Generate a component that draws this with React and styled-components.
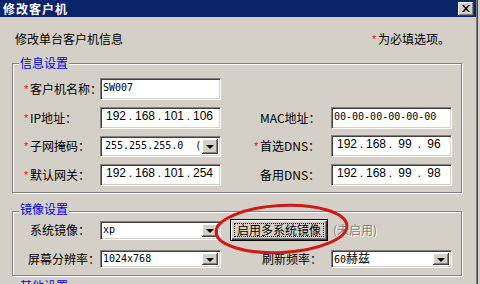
import React from 'react';
import styled, { createGlobalStyle } from 'styled-components';

const CJK = `"Noto Sans CJK SC", "Noto Sans", sans-serif`;
const MONO = `"DejaVu Sans Mono", "Noto Sans CJK SC", monospace`;
const FACE = '#d4d0c8';

const Global = createGlobalStyle`
  html, body { margin: 0; padding: 0; background: ${FACE}; }
  body { width: 480px; height: 284px; overflow: hidden; font-family: ${CJK}; font-size: 12px; color: #000; }
  * { box-sizing: border-box; }
`;

const Win = styled.div`
  position: relative;
  width: 477px;
  height: 284px;
  background: ${FACE};
  border-right: 1px solid #808080;
  box-shadow: 1px 0 0 #404040;
  overflow: hidden;
`;

const TitleBar = styled.div`
  height: 17px;
  background: #0a246a;
  display: flex;
  align-items: center;
  justify-content: space-between;
  padding: 0 2px 0 3px;
`;

const Title = styled.span`
  color: #fff;
  font-weight: bold;
  font-size: 12px;
  line-height: 14px;
  letter-spacing: 1px;
`;

const CloseBtn = styled.div`
  width: 16px;
  height: 14px;
  background: ${FACE};
  box-shadow: inset -1px -1px 0 #404040, inset 1px 1px 0 #fff, inset -2px -2px 0 #808080;
  display: flex;
  align-items: center;
  justify-content: center;
  padding-bottom: 1px;
`;

const HeaderRow = styled.div`
  display: flex;
  justify-content: space-between;
  margin-top: 15px;
  padding: 0 26px 0 15px;
  height: 14px;
  line-height: 14px;
`;

const Note = styled.span`
  display: flex;
  align-items: center;
`;

const Star = styled.span`
  display: inline-block;
  width: ${p => p.$w || 6}px;
  color: #e01010;
  font-family: "Liberation Sans", sans-serif;
  font-size: 11px;
  flex: none;
`;

const Group = styled.fieldset`
  margin: ${p => p.$mt}px 0 0 12px;
  width: 450px;
  padding: 0;
  border: 1px solid #808080;
  box-shadow: inset 1px 1px 0 #fff, 1px 1px 0 #fff;
  min-width: 0;
`;

const Legend = styled.legend`
  margin-left: 6px;
  padding: 0 1px ${p => p.$pb || 0}px;
  color: #0000e0;
  font-size: 12px;
  line-height: 14px;
  background: ${FACE};
`;

const Rows = styled.div`
  display: flex;
  flex-direction: column;
  gap: ${p => p.$gap}px;
  padding: ${p => p.$pad};
  margin-top: ${p => p.$mt || 0}px;
`;

const Row = styled.div`
  display: flex;
  align-items: center;
  height: ${p => p.$h || 22}px;
`;

const Label = styled.div`
  width: ${p => p.$w}px;
  margin-left: ${p => p.$ml || 0}px;
  padding-left: ${p => p.$indent || 0}px;
  display: flex;
  align-items: center;
  line-height: 14px;
  white-space: nowrap;
  flex: none;
`;

const sunken = `
  border: 1px solid;
  border-color: #808080 #fff #fff #808080;
  box-shadow: inset 1px 1px 0 #404040, inset -1px -1px 0 ${FACE};
  background: #fff;
`;

const Edit = styled.div`
  ${sunken}
  width: 121px;
  height: 22px;
  flex: none;
  padding: 2px 0 0 2px;
  font-family: ${MONO};
  font-size: 10px;
  line-height: 14px;
  white-space: pre;
`;

const IPBox = styled.div`
  ${sunken}
  width: 121px;
  height: 22px;
  flex: none;
  display: flex;
  padding: 2px 0 0 4px;
  font-family: "Liberation Sans", sans-serif;
  font-size: 12px;
  line-height: 12px;
`;

const Octet = styled.span`
  width: 22px;
  text-align: center;
`;

const Dot = styled.span`
  width: 7px;
  text-align: center;
`;

const Combo = styled.div`
  ${sunken}
  width: 121px;
  height: ${p => p.$h}px;
  flex: none;
  display: flex;
  align-items: center;
  padding: 2px;
`;

const ComboText = styled.div`
  flex: 1;
  overflow: hidden;
  white-space: pre;
  padding-left: ${p => p.$pl || 0}px;
  font-family: ${MONO};
  font-size: 10px;
  line-height: 14px;
`;

const CjkPart = styled.span`
  font-family: ${CJK};
  font-size: 12px;
`;

const DropBtn = styled.div`
  width: 16px;
  align-self: stretch;
  flex: none;
  background: ${FACE};
  box-shadow: inset -1px -1px 0 #404040, inset 1px 1px 0 #fff, inset -2px -2px 0 #808080;
  display: flex;
  align-items: center;
  justify-content: center;
`;

const Arrow = styled.span`
  width: 0;
  height: 0;
  border-left: 4px solid transparent;
  border-right: 4px solid transparent;
  border-top: 4px solid #000;
  margin-top: 1px;
`;

const PushBtn = styled.div`
  margin-left: 9px;
  width: 98px;
  height: 22px;
  flex: none;
  border: 1px solid #000;
  background: ${FACE};
  box-shadow: inset 1px 1px 0 #fff, inset -1px -1px 0 #404040, inset -2px -2px 0 #808080;
  padding: 3px;
  display: flex;
`;

const Focus = styled.div`
  flex: 1;
  border: 1px dotted #000;
  display: flex;
  align-items: center;
  justify-content: center;
  line-height: 14px;
  white-space: nowrap;
`;

const Disabled = styled.span`
  margin-left: 5px;
  color: #808080;
  text-shadow: 1px 1px 0 #fff;
  line-height: 14px;
`;

const Mark = styled.svg`
  position: absolute;
  left: 0;
  top: 0;
  pointer-events: none;
`;

function Ip({ parts }) {
  return (
    <IPBox>
      {parts.map((p, i) => (
        <React.Fragment key={i}>
          {i > 0 && <Dot>.</Dot>}
          <Octet>{p}</Octet>
        </React.Fragment>
      ))}
    </IPBox>
  );
}

function Drop({ children, h = 21, pl }) {
  return (
    <Combo $h={h}>
      <ComboText $pl={pl}>{children}</ComboText>
      <DropBtn><Arrow /></DropBtn>
    </Combo>
  );
}

function L({ req, w = 76, ml, indent, children }) {
  return (
    <Label $w={w} $ml={ml} $indent={indent}>
      {!indent && <Star>{req ? '*' : ''}</Star>}
      {children}
    </Label>
  );
}

export default function App() {
  return (
    <>
      <Global />
      <Win>
        <TitleBar>
          <Title>修改客户机</Title>
          <CloseBtn>
            <svg width="8" height="7" viewBox="0 0 8 7">
              <path d="M0 0h2l2 2.4L6 0h2L5 3.5 8 7H6L4 4.6 2 7H0l3-3.5z" fill="#000" />
            </svg>
          </CloseBtn>
        </TitleBar>

        <HeaderRow>
          <span>修改单台客户机信息</span>
          <Note><Star>*</Star>为必填选项。</Note>
        </HeaderRow>

        <Group $mt={10}>
          <Legend>信息设置</Legend>
          <Rows $gap={6.5} $pad="8px 0 6px 11px">
            <Row>
              <L req>客户机名称：</L>
              <Edit>SW007</Edit>
            </Row>
            <Row>
              <L req>IP地址：</L>
              <Ip parts={['192', '168', '101', '106']} />
              <L w={77} ml={33}>MAC地址：</L>
              <Edit>00-00-00-00-00-00</Edit>
            </Row>
            <Row>
              <L req>子网掩码：</L>
              <Drop pl={2}>255.255.255.0  (Private)</Drop>
              <L req w={77} ml={33}>首选DNS：</L>
              <Ip parts={['192', '168', '99', '96']} />
            </Row>
            <Row>
              <L req>默认网关：</L>
              <Ip parts={['192', '168', '101', '254']} />
              <L w={77} ml={33}>备用DNS：</L>
              <Ip parts={['192', '168', '99', '98']} />
            </Row>
          </Rows>
        </Group>

        <Group $mt={9}>
          <Legend $pb={6}>镜像设置</Legend>
          <Rows $gap={9.5} $pad="0 0 7px 11px" $mt={-2}>
            <Row $h={21}>
              <L>系统镜像：</L>
              <Drop h={19}>xp</Drop>
              <PushBtn><Focus>启用多系统镜像</Focus></PushBtn>
              <Disabled>(未启用)</Disabled>
            </Row>
            <Row $h={18}>
              <L indent={4}>屏幕分辨率：</L>
              <Drop h={18}>1024x768</Drop>
              <L w={77} ml={33} indent={8}>刷新频率：</L>
              <Drop h={18}>60<CjkPart>赫兹</CjkPart></Drop>
            </Row>
          </Rows>
        </Group>

        <Group $mt={3}>
          <Legend>其他设置</Legend>
          <Rows $gap={6} $pad="8px 0 6px 11px">
            <Row />
          </Rows>
        </Group>

        <Mark width="480" height="284">
          <ellipse cx="281.5" cy="229" rx="65.5" ry="23.5" fill="none" stroke="#d01818" strokeWidth="3" transform="rotate(-3 281.5 229)" />
        </Mark>
      </Win>
    </>
  );
}
